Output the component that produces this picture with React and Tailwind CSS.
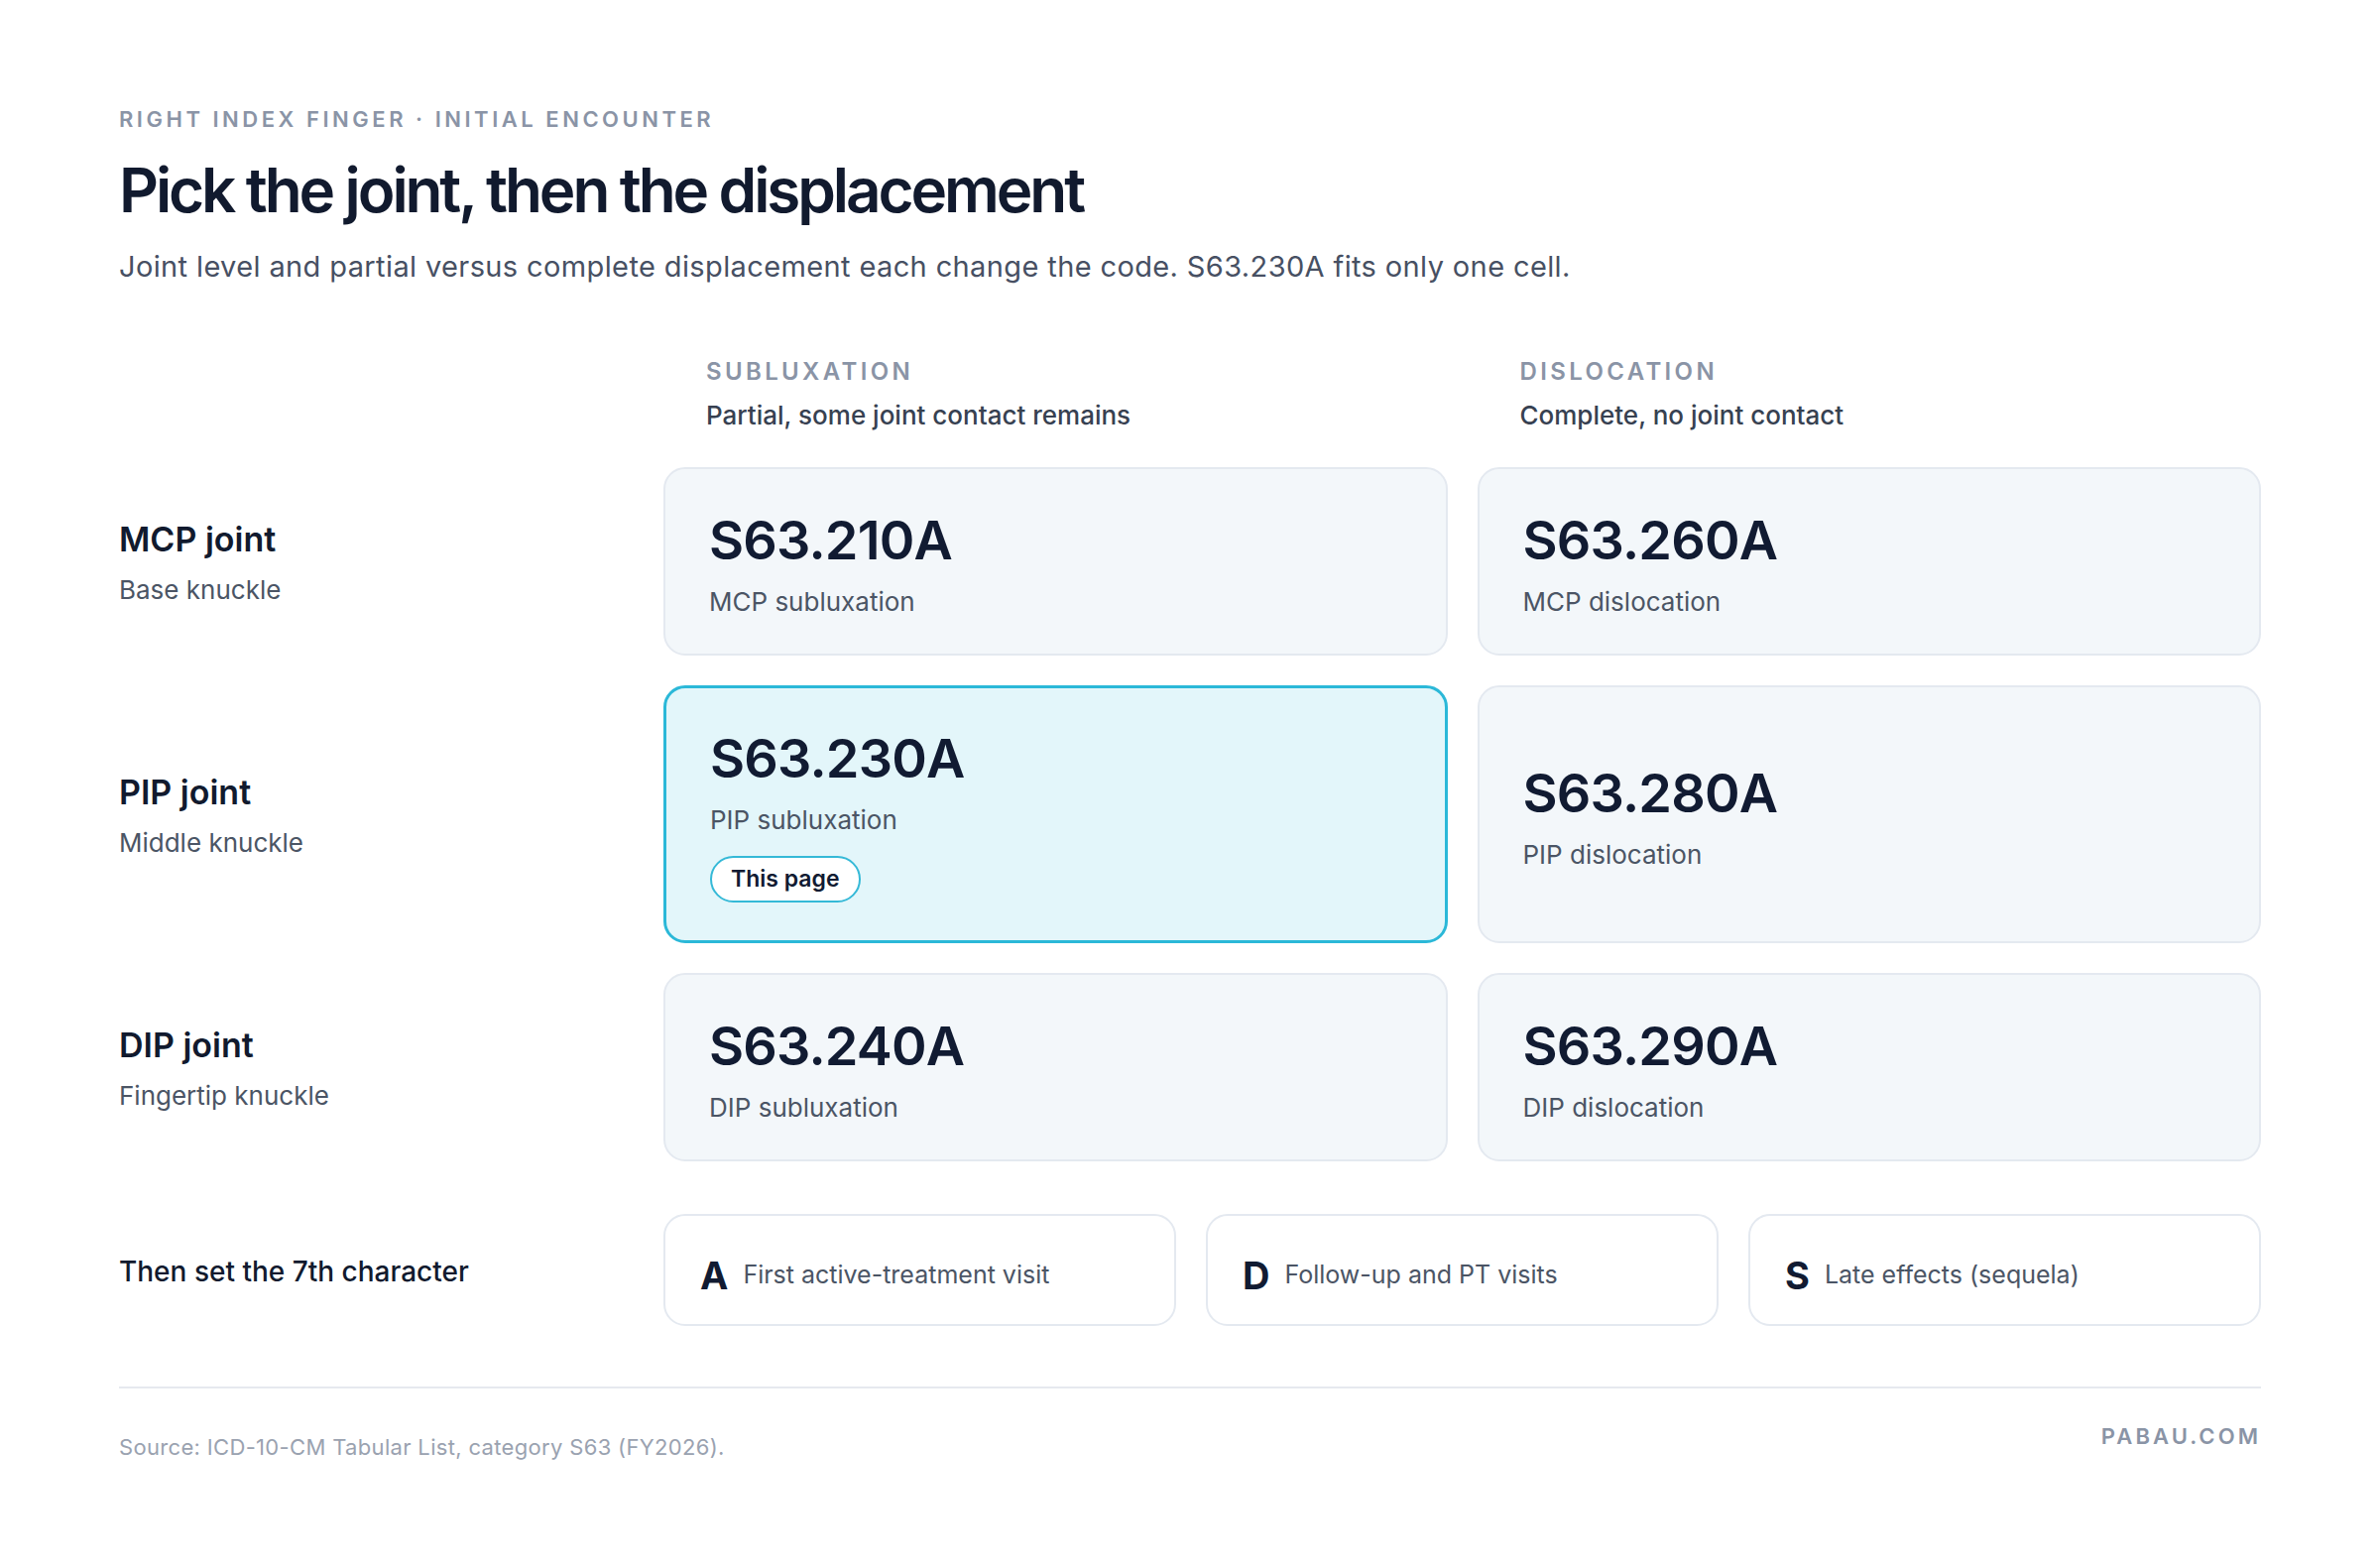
import React from "react";

const rows = [
  {
    name: "MCP joint",
    sub: "Base knuckle",
    cells: [
      { code: "S63.210A", desc: "MCP subluxation" },
      { code: "S63.260A", desc: "MCP dislocation" },
    ],
  },
  {
    name: "PIP joint",
    sub: "Middle knuckle",
    cells: [
      { code: "S63.230A", desc: "PIP subluxation", current: true },
      { code: "S63.280A", desc: "PIP dislocation" },
    ],
  },
  {
    name: "DIP joint",
    sub: "Fingertip knuckle",
    cells: [
      { code: "S63.240A", desc: "DIP subluxation" },
      { code: "S63.290A", desc: "DIP dislocation" },
    ],
  },
];

const seventh = [
  { letter: "A", text: "First active-treatment visit" },
  { letter: "D", text: "Follow-up and PT visits" },
  { letter: "S", text: "Late effects (sequela)" },
];

function ColumnHead({ title, sub }) {
  return (
    <div className="pl-[43px] pb-[9px]">
      <div className="text-[24px] leading-none font-semibold tracking-[0.14em] text-[#8a94a6]">{title}</div>
      <div className="mt-[19px] text-[26px] leading-none font-medium text-[#374151]">{sub}</div>
    </div>
  );
}

function CodeCell({ code, desc, current }) {
  return (
    <div
      className={`flex flex-col justify-center rounded-[22px] pl-[44px] pr-[40px] ${
        current
          ? "border-[3px] border-[#2bb8d8] bg-[#e3f6fa] pt-[44px] pb-[38px]"
          : "border-2 border-[#e4e9f0] bg-[#f3f7fa] pt-[45px] pb-[39px]"
      }`}
    >
      <div className="text-[54px] leading-none font-semibold tracking-[-0.015em] text-[#111b32]">{code}</div>
      <div className="mt-[22px] text-[26px] leading-none text-[#4b5565]">{desc}</div>
      {current && (
        <div className="mt-[23px]">
          <span className="inline-flex h-[47px] items-center rounded-full border-2 border-[#35b9d7] bg-white px-[19px] text-[23px] font-semibold text-[#111b32]">
            This page
          </span>
        </div>
      )}
    </div>
  );
}

export default function App() {
  return (
    <div className="min-h-screen bg-white font-['Inter',sans-serif]">
      <div className="w-[2400px] h-[1580px] px-[120px] pt-[109px]">
        <div className="text-[22px] leading-none font-semibold tracking-[0.16em] text-[#8a94a6]">
          RIGHT INDEX FINGER · INITIAL ENCOUNTER
        </div>
        <h1 className="mt-[30px] text-[62px] leading-none font-semibold tracking-[-0.05em] text-[#111a2e]">
          Pick the joint, then the displacement
        </h1>
        <p className="mt-[31px] text-[29px] leading-none tracking-[0.013em] text-[#475063]">
          Joint level and partial versus complete displacement each change the code. S63.230A fits only one cell.
        </p>

        <div className="mt-[80px] grid grid-cols-[519px_1fr_1fr] gap-x-[30px] gap-y-[30px]">
          <div />
          <ColumnHead title="SUBLUXATION" sub="Partial, some joint contact remains" />
          <ColumnHead title="DISLOCATION" sub="Complete, no joint contact" />

          {rows.map((r) => (
            <React.Fragment key={r.name}>
              <div className="flex flex-col justify-center pt-[3px]">
                <div className="text-[34px] leading-none font-semibold text-[#111a2e]">{r.name}</div>
                <div className="mt-[21px] text-[26px] leading-none text-[#4b5565]">{r.sub}</div>
              </div>
              {r.cells.map((c) => (
                <CodeCell key={c.code} {...c} />
              ))}
            </React.Fragment>
          ))}
        </div>

        <div className="mt-[53px] flex">
          <div className="w-[549px] flex items-center pt-[3px] text-[28px] font-medium text-[#111a2e]">
            Then set the 7th character
          </div>
          <div className="flex-1 grid grid-cols-3 gap-[30px]">
            {seventh.map((s) => (
              <div
                key={s.letter}
                className="h-[113px] flex items-center gap-[15px] rounded-[22px] border-2 border-[#e4e9f0] bg-white px-[35px] pt-[10px]"
              >
                <span className="text-[38px] leading-none font-bold text-[#111b32]">{s.letter}</span>
                <span className="text-[25px] leading-none text-[#4b5565]">{s.text}</span>
              </div>
            ))}
          </div>
        </div>

        <div className="mt-[61px] h-[2px] bg-[#e6e9ef]" />

        <div className="mt-[37px] flex items-start justify-between">
          <div className="mt-[11px] text-[22px] leading-none tracking-[0.015em] text-[#9aa2b0]">
            Source: ICD-10-CM Tabular List, category S63 (FY2026).
          </div>
          <div className="text-[22px] leading-none font-semibold tracking-[0.14em] text-[#8a94a6]">PABAU.COM</div>
        </div>
      </div>
    </div>
  );
}
